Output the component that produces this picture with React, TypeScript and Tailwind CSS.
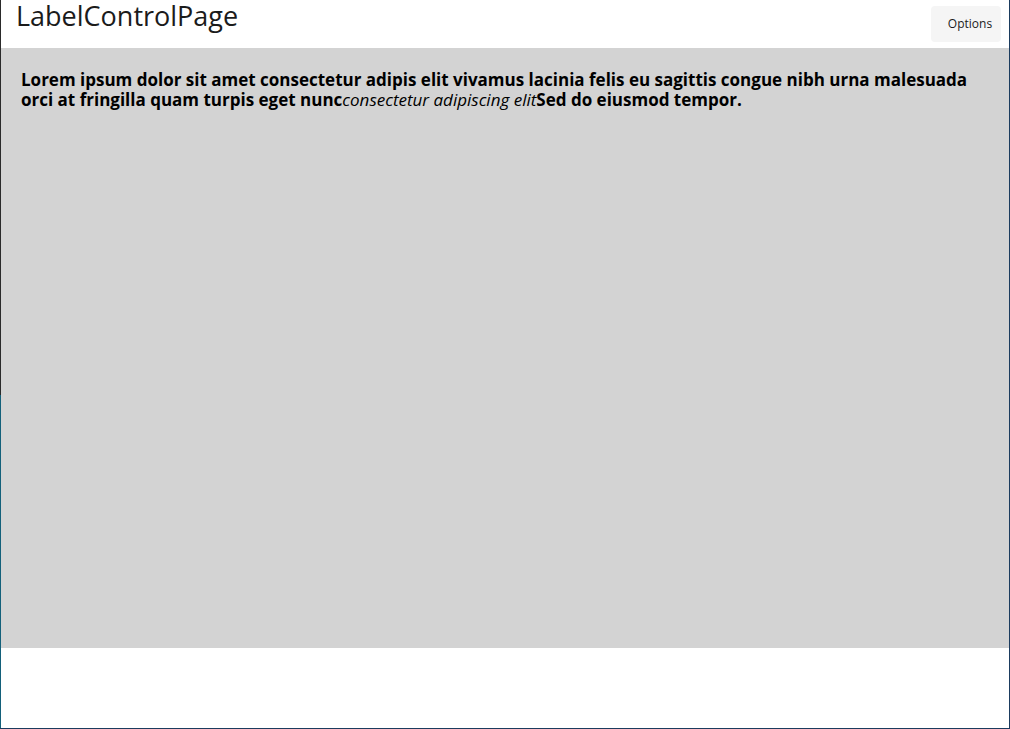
import React from "react";

export default function App() {
  return (
    <div className="w-[1010px] h-[729px] flex bg-white border-b border-r border-[#1b3b5e] overflow-hidden">
      <div className="w-px flex flex-col shrink-0">
        <div className="h-[395px] bg-[#2a2a2a]" />
        <div className="flex-1 bg-[#13607a]" />
      </div>
      <div className="flex-1 flex flex-col min-w-0">
        <div className="h-[48px] flex items-start justify-between shrink-0">
          <div
            className="pl-[15px] text-[27px] leading-[31px] text-[#1b1b1b]"
            style={{ fontFamily: "'Open Sans', 'Noto Sans', sans-serif" }}
          >
            LabelControlPage
          </div>
          <button
            className="mt-[6px] mr-[8px] w-[70px] h-[36px] rounded-[4px] bg-[#f5f5f5] text-[12px] text-[#1b1b1b] flex items-center justify-center pl-[8px]"
            style={{ fontFamily: "'Open Sans', 'Noto Sans', sans-serif" }}
          >
            Options
          </button>
        </div>
        <div
          className="h-[600px] bg-[#d3d3d3] px-[20px] pt-[22px] text-[17px] leading-[20px] text-black shrink-0"
          style={{ fontFamily: "'Open Sans', 'Noto Sans', sans-serif" }}
        >
          <span className="font-bold">
            Lorem ipsum dolor sit amet consectetur adipis elit vivamus lacinia felis eu sagittis congue nibh urna malesuada orci at fringilla quam turpis eget nunc
          </span>
          <span className="italic">consectetur adipiscing elit</span>
          <span className="font-bold">Sed do eiusmod tempor.</span>
        </div>
        <div className="flex-1" />
      </div>
    </div>
  );
}
